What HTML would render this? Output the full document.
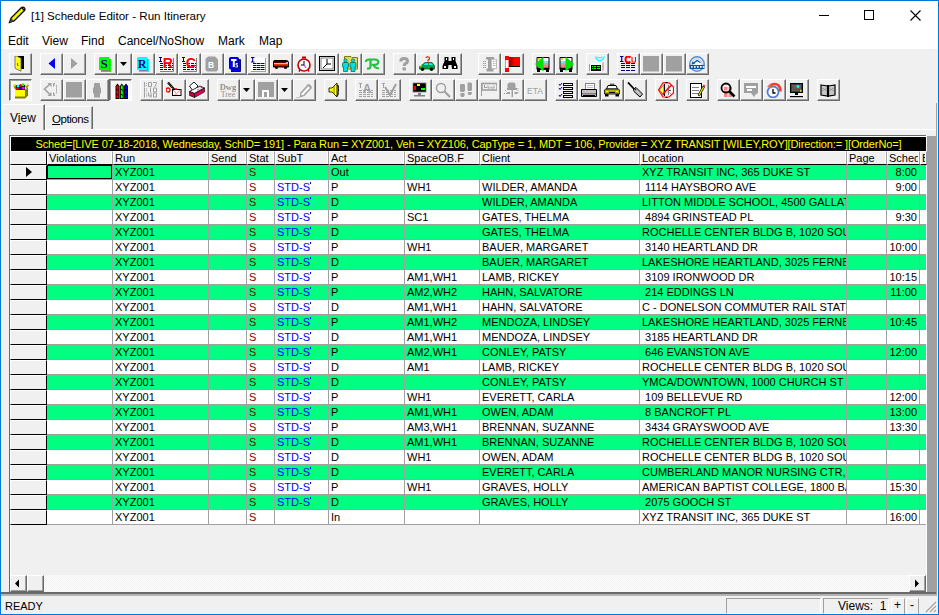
<!DOCTYPE html><html><head><meta charset="utf-8"><style>
*{box-sizing:border-box}
html,body{margin:0;padding:0}
body{width:939px;height:615px;overflow:hidden;background:#f0f0f0;position:relative;font-family:"Liberation Sans",sans-serif;}
.a{position:absolute}
.t{position:absolute;white-space:pre;overflow:hidden;font-size:11px;line-height:14px;color:#000}
.btn{position:absolute;width:23px;height:22px;background:#f0f0f0;border-top:1px solid #fff;border-left:1px solid #fff;border-right:1px solid #696969;border-bottom:1px solid #696969;box-shadow:inset -1px -1px 0 #a0a0a0}
.dd{position:absolute;width:15px;height:22px;background:#f0f0f0;border-top:1px solid #fff;border-left:1px solid #fff;border-right:1px solid #696969;border-bottom:1px solid #696969;box-shadow:inset -1px -1px 0 #a0a0a0}
.prs{position:absolute;width:23px;height:22px;border-top:1px solid #696969;border-left:1px solid #696969;border-right:1px solid #fff;border-bottom:1px solid #fff;box-shadow:inset 1px 1px 0 #a0a0a0;background-color:#fff;background-image:linear-gradient(45deg,#f0f0f0 25%,transparent 25%,transparent 75%,#f0f0f0 75%),linear-gradient(45deg,#f0f0f0 25%,transparent 25%,transparent 75%,#f0f0f0 75%);background-size:2px 2px;background-position:0 0,1px 1px}
svg{position:absolute;left:2px;top:2px}
</style></head><body>

<div class="a" style="left:0;top:0;width:939px;height:49px;background:#fff"></div>
<svg style="left:8px;top:6px" width="18" height="18" viewBox="0 0 18 18"><path d="M1.5 16.5 L3 12 L13.5 1.5 Q15 0.5 16.5 2 Q17.5 3.5 16.5 4.5 L6 15 Z" fill="#ffff00" stroke="#000" stroke-width="1.3"/><path d="M4 12.5 L13 3.5 M5.5 14 L14.5 5" stroke="#808000" stroke-width="0.8" stroke-dasharray="1 1"/><path d="M13.5 1.5 L16.5 4.5" stroke="#000" stroke-width="1.2"/><path d="M1.5 16.5 L3 12 L6 15 Z" fill="#404040"/></svg>
<div class="a" style="left:31px;top:8px;font-size:11.6px;line-height:16px;color:#000;white-space:pre">[1] Schedule Editor - Run Itinerary</div>
<div class="a" style="left:819px;top:15px;width:10px;height:1px;background:#000"></div>
<div class="a" style="left:864px;top:10px;width:10px;height:10px;border:1px solid #000"></div>
<svg style="left:910px;top:10px" width="11" height="11" viewBox="0 0 11 11"><path d="M0.5 0.5 L10.5 10.5 M10.5 0.5 L0.5 10.5" stroke="#000" stroke-width="1.1"/></svg>
<div class="a" style="left:8px;top:34px;font-size:12px;line-height:15px;white-space:pre">Edit</div>
<div class="a" style="left:42px;top:34px;font-size:12px;line-height:15px;white-space:pre">View</div>
<div class="a" style="left:81px;top:34px;font-size:12px;line-height:15px;white-space:pre">Find</div>
<div class="a" style="left:118px;top:34px;font-size:12px;line-height:15px;white-space:pre">Cancel/NoShow</div>
<div class="a" style="left:218px;top:34px;font-size:12px;line-height:15px;white-space:pre">Mark</div>
<div class="a" style="left:259px;top:34px;font-size:12px;line-height:15px;white-space:pre">Map</div>
<div class="btn" style="left:9px;top:53px"></div>
<svg style="left:12px;top:56px" width="16" height="16" viewBox="0 0 16 16"><path d="M6 0 H12 V13 H6 Z" fill="#000"/><path d="M3 0 H5 L6 1 H7 L8 2 H9 V15 H8 L7 14 H6 L5 13 H4 L3 12 Z" fill="#ff0" stroke="#5a5a7a" stroke-width="0.8"/><path d="M5.5 7 V9.5 H6.5" stroke="#5a5a7a" fill="none"/></svg>
<div class="btn" style="left:40px;top:53px"></div>
<svg style="left:43px;top:56px" width="16" height="16" viewBox="0 0 16 16"><path d="M12 2 L5.5 7.5 L12 13 Z" fill="#0000ff"/></svg>
<div class="btn" style="left:63px;top:53px"></div>
<svg style="left:66px;top:56px" width="16" height="16" viewBox="0 0 16 16"><path d="M5 2 L11.5 7.5 L5 13 Z" fill="#a0a0a0"/></svg>
<div class="btn" style="left:94px;top:53px"></div>
<svg style="left:97px;top:56px" width="16" height="16" viewBox="0 0 16 16"><rect x="4" y="3" width="10" height="13" fill="#00ff00"/><path d="M12.5 3 V14.5 H4" stroke="#808080" fill="none"/><path d="M3 1 H12 V14 H2 V2 Z" fill="#00ff00"/><text x="7" y="12" font-family="Liberation Serif" font-weight="bold" font-size="13" fill="#000080" text-anchor="middle">S</text></svg>
<div class="dd" style="left:117px;top:53px"></div>
<svg style="left:120px;top:62px" width="8" height="5"><path d="M0 0 H7 L3.5 4 Z" fill="#000"/></svg>
<div class="btn" style="left:132px;top:53px"></div>
<svg style="left:135px;top:56px" width="16" height="16" viewBox="0 0 16 16"><rect x="4" y="3" width="10" height="13" fill="#00ffff"/><path d="M12.5 3 V14.5 H4" stroke="#808080" fill="none"/><path d="M3 1 H12 V14 H2 V2 Z" fill="#00ffff"/><text x="7" y="12" font-family="Liberation Serif" font-weight="bold" font-size="12" fill="#000080" text-anchor="middle">R</text></svg>
<div class="btn" style="left:155px;top:53px"></div>
<svg style="left:158px;top:56px" width="16" height="16" viewBox="0 0 16 16"><path d="M1.5 1.5 H14.5 V14.5 H1.5Z" fill="#fff"/><path d="M15.5 2 V15.5 H2" stroke="#808080" fill="none"/><path d="M1 1.5 H4 M2.5 1 V5 M1 5.5 H4" stroke="#000080"/><path d="M2 7.5 H15" stroke="#000080" stroke-dasharray="3 1"/><path d="M2 9.5 H15" stroke="#000080" stroke-dasharray="3 1"/><path d="M2 11.5 H15" stroke="#000080" stroke-dasharray="3 1"/><path d="M2 13.5 H15" stroke="#000080" stroke-dasharray="3 1"/><text x="9.8" y="11.5" font-family="Liberation Sans" font-weight="bold" font-size="14" fill="#ff0000" text-anchor="middle">R</text></svg>
<div class="btn" style="left:178px;top:53px"></div>
<svg style="left:181px;top:56px" width="16" height="16" viewBox="0 0 16 16"><path d="M1.5 1.5 H14.5 V14.5 H1.5Z" fill="#fff"/><path d="M15.5 2 V15.5 H2" stroke="#808080" fill="none"/><path d="M1 1.5 H4 M2.5 1 V5 M1 5.5 H4" stroke="#000080"/><path d="M2 7.5 H15" stroke="#000080" stroke-dasharray="3 1"/><path d="M2 9.5 H15" stroke="#000080" stroke-dasharray="3 1"/><path d="M2 11.5 H15" stroke="#000080" stroke-dasharray="3 1"/><path d="M2 13.5 H15" stroke="#000080" stroke-dasharray="3 1"/><text x="9.8" y="12" font-family="Liberation Sans" font-weight="bold" font-size="14" fill="#ff0000" text-anchor="middle">C</text></svg>
<div class="btn" style="left:201px;top:53px"></div>
<svg style="left:204px;top:56px" width="16" height="16" viewBox="0 0 16 16"><path d="M4 0.5 H11 L14 3.5 V14 L12.5 15.5 H3 L1.5 14 V3 Z" fill="#a0a0a0"/><text x="7" y="11.5" font-family="Liberation Sans" font-weight="bold" font-size="8.5" fill="#fff" text-anchor="middle">B</text></svg>
<div class="btn" style="left:224px;top:53px"></div>
<svg style="left:227px;top:56px" width="16" height="16" viewBox="0 0 16 16"><rect x="4" y="3" width="9.5" height="12" fill="#0000ff"/><path d="M13.5 3.5 V15.5 H4" stroke="#000080" fill="none"/><rect x="2.5" y="1.5" width="9" height="11.5" rx="1" fill="#0000ff" stroke="#000080" stroke-width="1"/><path d="M4 3 H9.5 V5 H7.8 V11 H5.8 V5 H4 Z" fill="#fff"/><path d="M10.8 7.5 H9 V9 H10.5 V11 H8.5" stroke="#fff" stroke-width="0.9" fill="none"/></svg>
<div class="btn" style="left:247px;top:53px"></div>
<svg style="left:250px;top:56px" width="16" height="16" viewBox="0 0 16 16"><rect x="1" y="1.5" width="14" height="13" fill="#fff"/><path d="M15.5 2 V15.5 H1" stroke="#a0a0a0" fill="none"/><path d="M1 1.5 H4.5 M2.7 1.5 V6 M1 6 H4.5" stroke="#000080" stroke-width="1.1"/><path d="M3 7.5 H15" stroke="#000080" stroke-dasharray="3.5 0.5"/><path d="M3 9.5 H15" stroke="#000080" stroke-dasharray="3.5 0.5"/><path d="M3 11.5 H15" stroke="#000080" stroke-dasharray="3.5 0.5"/><path d="M3 13.5 H15" stroke="#000080" stroke-dasharray="3.5 0.5"/></svg>
<div class="btn" style="left:270px;top:53px"></div>
<svg style="left:273px;top:56px" width="16" height="16" viewBox="0 0 16 16"><path d="M0.5 5.5 Q0.5 4.5 2 4.5 H13.5 Q15.5 4.5 15.5 7 V11 H0.5 Z" fill="#900000" stroke="#000" stroke-width="1"/><rect x="1" y="5" width="14" height="1.5" fill="#300000"/><rect x="1" y="7.2" width="14" height="1.2" fill="#ffff40"/><rect x="1" y="8.4" width="14" height="1.2" fill="#ff2000"/><rect x="13" y="6" width="2" height="2" fill="#c0c0c0"/><circle cx="3.5" cy="11.5" r="1.5" fill="#000"/><circle cx="12.5" cy="11.5" r="1.5" fill="#000"/></svg>
<div class="btn" style="left:293px;top:53px"></div>
<svg style="left:296px;top:56px" width="16" height="16" viewBox="0 0 16 16"><circle cx="8" cy="9" r="6" fill="#fff" stroke="#c00000" stroke-width="1.6"/><rect x="6" y="0.5" width="4" height="2" fill="#c00000"/><path d="M8 5 V9 H5" stroke="#000" fill="none"/><path d="M8 9 L10 12" stroke="#ff00ff"/><path d="M4 14 L3 15.5 M12 14 L13 15.5" stroke="#c00000" stroke-width="1.5"/></svg>
<div class="btn" style="left:316px;top:53px"></div>
<svg style="left:319px;top:56px" width="16" height="16" viewBox="0 0 16 16"><rect x="0.5" y="0.5" width="15" height="14" fill="#fff" stroke="#000"/><rect x="2" y="2" width="12" height="11" fill="#fff" stroke="#808080" stroke-width="1"/><path d="M8 3 V8 H12 M8 8 L4 12" stroke="#000" fill="none"/></svg>
<div class="btn" style="left:339px;top:53px"></div>
<svg style="left:342px;top:56px" width="16" height="16" viewBox="0 0 16 16"><path d="M2.5 0.5 H9 L10 1.5 H15.5 V13 H2.5 Z" fill="#e0d860" stroke="#808000"/><circle cx="3.5" cy="4.5" r="1.7" fill="#00e0e0" stroke="#004040" stroke-width="0.5"/><circle cx="11" cy="4.5" r="1.7" fill="#00e0e0" stroke="#004040" stroke-width="0.5"/><path d="M1 6.5 H6 L6.5 7.5 V11 H5.5 V15.5 H1.5 V11 H0.5 V7.5 Z M8.5 6.5 H13.5 L14 7.5 V11 H13 V15.5 H9 V11 H8 V7.5 Z" fill="#00e0e0" stroke="#004040" stroke-width="0.6"/></svg>
<div class="btn" style="left:362px;top:53px"></div>
<svg style="left:365px;top:56px" width="16" height="16" viewBox="0 0 16 16"><path d="M0.8 6 Q1 3.5 4 3.5 H10 Q13.3 3.5 13.3 6 Q13.3 8.5 10 8.8 H6.5" stroke="#20c040" stroke-width="2" fill="none"/><path d="M5.5 4 V10.5 Q5.5 13 2 12.5" stroke="#20c040" stroke-width="2.2" fill="none"/><path d="M8.5 9 Q10 12.8 13.8 12" stroke="#20c040" stroke-width="2" fill="none"/></svg>
<div class="btn" style="left:393px;top:53px"></div>
<svg style="left:396px;top:56px" width="16" height="16" viewBox="0 0 16 16"><path d="M4.8 5.5 Q4.8 2.5 8 2.5 Q11.5 2.5 11.5 5 Q11.5 6.8 9.5 7.5 Q8.2 8 8.2 10" stroke="#a0a0a0" stroke-width="3" fill="none"/><rect x="6.5" y="11.3" width="3.5" height="3.2" rx="1" fill="#a0a0a0"/></svg>
<div class="btn" style="left:416px;top:53px"></div>
<svg style="left:419px;top:56px" width="16" height="16" viewBox="0 0 16 16"><path d="M7 2 Q7 0.8 8.5 0.8 Q10.5 0.8 10.5 2.5 Q10.5 3.5 9 4 V5" stroke="#ff0000" stroke-width="1.1" fill="none"/><rect x="8.5" y="5.5" width="1.2" height="1" fill="#ff0000"/><path d="M0.5 13 V10 L3 9 L6 6.5 H13 L15.5 9.5 V13 Z" fill="#00a040" stroke="#004000" stroke-width="0.6"/><path d="M4.5 9 L6.5 7.3 H9 V9 Z M10 7.3 H12.5 L14 9 H10Z" fill="#00ffff"/><rect x="0.5" y="9" width="2" height="1.5" fill="#ff0"/><circle cx="3.5" cy="13.2" r="1.7" fill="#000"/><circle cx="12.5" cy="13.2" r="1.7" fill="#000"/></svg>
<div class="btn" style="left:439px;top:53px"></div>
<svg style="left:442px;top:56px" width="16" height="16" viewBox="0 0 16 16"><path d="M2.5 1 H6.5 V5 H9.5 V1 H13.5 V5 L15.5 10 V13 H10 L9.5 9 H6.5 L6 13 H0.5 V10 L2.5 5 Z" fill="#000"/><rect x="2" y="10" width="2" height="2" fill="#fff"/><rect x="12" y="10" width="2" height="2" fill="#fff"/><rect x="4" y="2" width="1" height="2" fill="#fff"/><rect x="11" y="2" width="1" height="2" fill="#fff"/></svg>
<div class="btn" style="left:478px;top:53px"></div>
<svg style="left:481px;top:56px" width="16" height="16" viewBox="0 0 16 16"><path d="M5 1 H13 V3.5 H11 V12.5 H12.5 V15.5 H5.5 V12.5 H7 V3.5 H5 Z" fill="#a0a0a0"/><path d="M2 5.5 H5 M2 7.5 H5 M2 9.5 H5 M2 11.5 H5" stroke="#a0a0a0" stroke-dasharray="1.5 0.5"/><rect x="10.5" y="3.5" width="5" height="9" fill="#fff" stroke="#c0c0c0"/><path d="M12 5.5 H14.5 M12 7.5 H14.5 M12 9.5 H14.5" stroke="#a0a0a0" stroke-dasharray="1 0.5"/></svg>
<div class="btn" style="left:501px;top:53px"></div>
<svg style="left:504px;top:56px" width="16" height="16" viewBox="0 0 16 16"><rect x="1" y="0" width="4" height="16" fill="#ff0000"/><rect x="1.5" y="4" width="3" height="8" fill="#fff"/><defs><linearGradient id="fg" x1="0" x2="1"><stop offset="0" stop-color="#800000"/><stop offset="0.5" stop-color="#ff0000"/><stop offset="1" stop-color="#ff0000"/></linearGradient></defs><rect x="5" y="1" width="11" height="9.5" fill="url(#fg)"/><rect x="5" y="10" width="11" height="1" fill="#000"/></svg>
<div class="btn" style="left:532px;top:53px"></div>
<svg style="left:535px;top:56px" width="16" height="16" viewBox="0 0 16 16"><rect x="1.5" y="1" width="13" height="13" rx="1" fill="#000"/><rect x="2.5" y="2" width="11" height="3" fill="#fff"/><rect x="3" y="2" width="2" height="2" fill="#e0e000"/><rect x="2.5" y="5" width="11" height="2.5" fill="#80e0f0"/><rect x="2.5" y="7.5" width="11" height="1.2" fill="#fff"/><rect x="2.5" y="8.7" width="11" height="3" fill="#ff8080"/><rect x="2" y="14" width="3" height="2" fill="#000"/><rect x="11" y="14" width="3" height="2" fill="#000"/><path d="M8.5 0.5 V15.5 L0 8 Z" fill="#00e000"/></svg>
<div class="btn" style="left:555px;top:53px"></div>
<svg style="left:558px;top:56px" width="16" height="16" viewBox="0 0 16 16"><rect x="1.5" y="1" width="13" height="13" rx="1" fill="#000"/><rect x="2.5" y="2" width="11" height="3" fill="#fff"/><rect x="3" y="2" width="2" height="2" fill="#e0e000"/><rect x="2.5" y="5" width="11" height="2.5" fill="#80e0f0"/><rect x="2.5" y="7.5" width="11" height="1.2" fill="#fff"/><rect x="2.5" y="8.7" width="11" height="3" fill="#ff8080"/><rect x="2" y="14" width="3" height="2" fill="#000"/><rect x="11" y="14" width="3" height="2" fill="#000"/><path d="M7.5 0.5 V15.5 L16 8 Z" fill="#00e000"/></svg>
<div class="btn" style="left:586px;top:53px"></div>
<svg style="left:589px;top:56px" width="16" height="16" viewBox="0 0 16 16"><path d="M6.5 0.5 Q7.5 4 10.5 5 Q14 4 15.5 0.5" stroke="#00ffff" stroke-width="1.1" fill="none"/><path d="M8.5 1 Q10.5 3 13.5 1" stroke="#00ffff" stroke-width="1" fill="none"/><path d="M1 7 H13 L15 6 V14 L13 15.5 H1 Z" fill="#f8f8f8"/><rect x="0" y="8" width="1" height="7" fill="#a0a0a0"/><path d="M13 7 L15 6 V14 L13 15.5 Z" fill="#c0c0c0"/><rect x="2" y="9" width="10" height="6" fill="#000"/><path d="M3 10.5 H4 M5 10.5 H7 M8 10.5 H11 M3 12.5 H4 M5 12.5 H7 M8 12.5 H11" stroke="#00ff00"/></svg>
<div class="btn" style="left:617px;top:53px"></div>
<svg style="left:620px;top:56px" width="16" height="16" viewBox="0 0 16 16"><path d="M0 0.5 H3.5 M1.7 0.5 V5.5 M0 5.5 H3.5" stroke="#000080" stroke-width="1.2"/><path d="M1 7.5 H16" stroke="#000080" stroke-width="1.1" stroke-dasharray="4 1"/><path d="M1 9.5 H16" stroke="#000080" stroke-width="1.1" stroke-dasharray="4 1"/><path d="M1 11.5 H16" stroke="#000080" stroke-width="1.1" stroke-dasharray="4 1"/><path d="M1 14.5 H16" stroke="#000080" stroke-width="1.1" stroke-dasharray="4 1"/><path d="M10.5 1.5 Q9.5 0.5 8 0.5 Q5.5 0.5 5.5 3.5 Q5.5 6.5 8 6.5 Q9.5 6.5 10.5 5.5" stroke="#ff0000" stroke-width="2" fill="none"/><path d="M12 1 V5 Q12 6.2 13.8 6.2 Q15.5 6.2 15.5 5 V1" stroke="#ff0000" stroke-width="1.1" fill="none"/></svg>
<div class="btn" style="left:640px;top:53px"></div>
<svg style="left:643px;top:56px" width="16" height="16" viewBox="0 0 16 16"><rect x="0" y="0" width="16" height="15.5" fill="#a0a0a0"/></svg>
<div class="btn" style="left:663px;top:53px"></div>
<svg style="left:666px;top:56px" width="16" height="16" viewBox="0 0 16 16"><rect x="0" y="0" width="16" height="15.5" fill="#a0a0a0"/></svg>
<div class="btn" style="left:686px;top:53px"></div>
<svg style="left:689px;top:56px" width="16" height="16" viewBox="0 0 16 16"><circle cx="8" cy="8" r="7.2" fill="#f4f6fa" stroke="#5a8cc8" stroke-width="1.5"/><circle cx="8" cy="8" r="5.2" fill="none" stroke="#b0c8e8" stroke-width="1"/><rect x="0.5" y="9" width="15" height="4" fill="#0a55a5"/><rect x="2" y="10" width="1.6" height="1.8" fill="#fff"/><rect x="5" y="10" width="1.6" height="1.8" fill="#fff"/><rect x="8" y="10" width="1.6" height="1.8" fill="#fff"/><rect x="11" y="10" width="1.6" height="1.8" fill="#fff"/><rect x="13.8" y="10" width="1.6" height="1.8" fill="#fff"/><path d="M4 7.5 L8 4.5 L11.5 6.5" stroke="#0a55a5" stroke-width="1.4" fill="none"/><path d="M2.8 8.5 L3.3 5.5 L6 7.8 Z" fill="#0a55a5"/></svg>
<div class="prs" style="left:9px;top:79px"></div>
<svg style="left:13px;top:83px" width="16" height="16" viewBox="0 0 16 16"><path d="M0 2.5 L2 1 L4 5 L2.5 7 Z" fill="#808000"/><path d="M0 2.5 L2 1 L2.5 2.5 L0.8 4 Z" fill="#ffff00"/><path d="M12 3 L14.5 1 L16 2.5 L13.5 5 Z" fill="#808000"/><path d="M12.8 2.5 L14.5 1 L15 2 L13.5 3.5Z" fill="#ffff00"/><rect x="3" y="2" width="9" height="5" fill="#000"/><circle cx="5" cy="3" r="1.5" fill="#00ffff"/><circle cx="7.5" cy="2.5" r="1.5" fill="#ff0000"/><circle cx="10" cy="1.8" r="1.5" fill="#00ff00"/><circle cx="4.5" cy="5.5" r="1.5" fill="#ff0000"/><circle cx="7.3" cy="5.6" r="1.6" fill="#0000ff"/><circle cx="10.3" cy="5" r="1.6" fill="#ff00ff"/><rect x="2" y="7" width="10" height="7" fill="#ffff00"/><rect x="2" y="13.5" width="10" height="2" fill="#808000"/><path d="M12 7 L15 4 V12.5 L12 15.5 Z" fill="#808000"/></svg>
<div class="btn" style="left:40px;top:79px"></div>
<svg style="left:43px;top:82px" width="16" height="16" viewBox="0 0 16 16"><path d="M7 2 L1.5 7 L7 12.5" stroke="#a0a0a0" stroke-width="1.6" fill="none"/><path d="M4.5 1 H8.5 V5 Z M4.5 14 H8.5 V10 Z" fill="#a0a0a0"/><path d="M10.5 1.5 H12.5 M10.5 13.5 H12.5 M13.5 3 V12" stroke="#a0a0a0" stroke-dasharray="1.5 0.7" fill="none"/><path d="M10 1 V5 L12 3Z M10 14 V10 L12 12Z" fill="#a0a0a0"/></svg>
<div class="btn" style="left:63px;top:79px"></div>
<svg style="left:66px;top:82px" width="16" height="16" viewBox="0 0 16 16"><rect x="0" y="0" width="16" height="15.5" fill="#a0a0a0"/></svg>
<div class="btn" style="left:86px;top:79px"></div>
<svg style="left:89px;top:82px" width="16" height="16" viewBox="0 0 16 16"><path d="M5.5 1 H10.5 L11 2 V5 L12 6 V11 L11 12 V15.5 H5 V12 L4 11 V6 L5 5 V2 Z" fill="#a0a0a0"/></svg>
<div class="prs" style="left:109px;top:79px"></div>
<svg style="left:113px;top:83px" width="16" height="16" viewBox="0 0 16 16"><path d="M2.5 3 L4.5 0.5 L6.5 3 V16 H2.5 Z" fill="#000"/><rect x="3.5" y="2.5" width="2" height="12.5" fill="#ff0000"/><path d="M3.5 6 L5.5 7.5 M3.5 11 L5.5 12.5" stroke="#000" stroke-width="1"/><path d="M6.8 3 L8.8 0.5 L10.8 3 V16 H6.8 Z" fill="#000"/><rect x="7.8" y="2.5" width="2" height="12.5" fill="#00ff00"/><path d="M7.8 6 L9.8 7.5 M7.8 11 L9.8 12.5" stroke="#000" stroke-width="1"/><path d="M11 3 L13 0.5 L15 3 V16 H11 Z" fill="#000"/><rect x="12" y="2.5" width="2" height="12.5" fill="#0000ff"/><path d="M12 6 L14 7.5 M12 11 L14 12.5" stroke="#000" stroke-width="1"/></svg>
<div class="btn" style="left:140px;top:79px"></div>
<svg style="left:143px;top:82px" width="16" height="16" viewBox="0 0 16 16"><path d="M1.5 0 V5 M5.5 0.5 H8.5 V4.5 H5.5 Z M10 0.5 H13.5 V1.5 L11.5 5 " stroke="#a0a0a0" fill="none"/><path d="M3 1h1v1h-1z M3 3h1v1h-1z" fill="#a0a0a0"/><path d="M1.5 5.5 V10.5 M7.5 5.5 V10.5 M10.5 6.0 H13.5 V10.0 H10.5 Z " stroke="#a0a0a0" fill="none"/><path d="M3 6.5h1v1h-1z M3 8.5h1v1h-1z" fill="#a0a0a0"/><path d="M1.5 10.5 V15.5 M5.5 10.5 V14.0 H9 M8 10.5 V15.5 M10.5 11.0 H13.5 V15.0 H10.5 Z " stroke="#a0a0a0" fill="none"/><path d="M3 11.5h1v1h-1z M3 13.5h1v1h-1z" fill="#a0a0a0"/></svg>
<div class="btn" style="left:163px;top:79px"></div>
<svg style="left:166px;top:82px" width="16" height="16" viewBox="0 0 16 16"><path d="M2 0.5 L9.5 9" stroke="#000" stroke-width="2.2"/><path d="M2.5 1.2 L9 8.5" stroke="#c0c000" stroke-width="0.8" stroke-dasharray="1 1"/><ellipse cx="5" cy="8" rx="2.5" ry="1.8" fill="#fff"/><circle cx="2" cy="8" r="2" fill="#fff" stroke="#ff0000" stroke-width="1.3"/><rect x="6.5" y="7.5" width="8.5" height="6" fill="#fff" stroke="#000" stroke-width="1"/><path d="M7 8 L10.5 11.5 L14.5 8" stroke="#ff8080" fill="none"/><path d="M8 13 L10 10.5 L12 13" fill="#ffb0b0"/><circle cx="10" cy="7" r="1" fill="#ff0000"/></svg>
<div class="btn" style="left:186px;top:79px"></div>
<svg style="left:189px;top:82px" width="16" height="16" viewBox="0 0 16 16"><path d="M0.5 4 L5 0 L9 4 L7 6.5 L4 9 Z" fill="#fff" stroke="#000" stroke-width="0.9"/><path d="M0.5 9.5 L11 4 L15.5 6 L5.5 11.5 Z" fill="#e0e0e0" stroke="#000" stroke-width="0.8"/><path d="M2 9.3 L8 6.3 L11 7.5 L5 10.5 Z" fill="#fff"/><path d="M0.5 9.5 L5.5 11.5 V15.5 L0.5 13.5 Z" fill="#c00040" stroke="#000" stroke-width="0.6"/><path d="M5.5 11.5 L15.5 6 V10 L5.5 15.5 Z" fill="#e00050" stroke="#000" stroke-width="0.6"/><circle cx="12.5" cy="5.3" r="0.8" fill="#ff00a0"/><circle cx="9" cy="7.8" r="0.7" fill="#ff00a0"/></svg>
<div class="btn" style="left:217px;top:79px"></div>
<svg style="left:220px;top:82px" width="16" height="16" viewBox="0 0 16 16"><text x="8" y="7.5" font-family="Liberation Serif" font-size="8.5" fill="#909090" text-anchor="middle" font-weight="bold">Dwg</text><text x="8" y="15" font-family="Liberation Serif" font-size="8" fill="#909090" text-anchor="middle">Tree</text></svg>
<div class="dd" style="left:240px;top:79px"></div>
<svg style="left:243px;top:88px" width="8" height="5"><path d="M0 0 H7 L3.5 4 Z" fill="#000"/></svg>
<div class="btn" style="left:255px;top:79px"></div>
<svg style="left:258px;top:82px" width="16" height="16" viewBox="0 0 16 16"><rect x="0" y="0" width="16" height="15" fill="#a0a0a0"/><path d="M4 15 V8 H11 V15" fill="#fff"/><path d="M6 15 V10 H9 V15" fill="#a0a0a0"/></svg>
<div class="dd" style="left:278px;top:79px"></div>
<svg style="left:281px;top:88px" width="8" height="5"><path d="M0 0 H7 L3.5 4 Z" fill="#000"/></svg>
<div class="btn" style="left:293px;top:79px"></div>
<svg style="left:296px;top:82px" width="16" height="16" viewBox="0 0 16 16"><path d="M5 11 L12 3 L15 6 L8 13.5 L4.5 14.5 Z" fill="#fff" stroke="#a0a0a0" stroke-width="1.4"/><path d="M6.5 10.5 L12.5 4.5 M8 12 L14 6" stroke="#c8c8c8" stroke-width="0.8"/><path d="M0.5 15.5 H3.5" stroke="#a0a0a0" stroke-dasharray="1 1"/><path d="M12 3 L13 1.8 L16 5 L15 6 Z" fill="#a0a0a0"/></svg>
<div class="btn" style="left:324px;top:79px"></div>
<svg style="left:327px;top:82px" width="16" height="16" viewBox="0 0 16 16"><path d="M2 6 H5 L10 1 V15 L5 10 H2 Z" fill="#ff0" stroke="#000" stroke-width="0.8"/><path d="M7 4 V12" stroke="#808000"/><path d="M10 3 Q12 4 11 6 Q12 8 11 10 Q12 12 10 14" fill="none" stroke="#000" stroke-width="1.2"/></svg>
<div class="btn" style="left:355px;top:79px"></div>
<svg style="left:358px;top:82px" width="16" height="16" viewBox="0 0 16 16"><rect x="1" y="1" width="3" height="1" fill="#a0a0a0"/><rect x="2" y="1" width="1" height="5" fill="#a0a0a0"/><path d="M1 8.5 H15" stroke="#a0a0a0" stroke-dasharray="3 1"/><path d="M1 10.5 H15" stroke="#a0a0a0" stroke-dasharray="3 1"/><path d="M1 12.5 H15" stroke="#a0a0a0" stroke-dasharray="3 1"/><path d="M1 14.5 H15" stroke="#a0a0a0" stroke-dasharray="3 1"/><text x="9" y="11" font-family="Liberation Sans" font-weight="bold" font-size="12" fill="#a0a0a0" text-anchor="middle">A</text></svg>
<div class="btn" style="left:378px;top:79px"></div>
<svg style="left:381px;top:82px" width="16" height="16" viewBox="0 0 16 16"><rect x="1" y="1" width="3" height="1" fill="#a0a0a0"/><rect x="2" y="1" width="1" height="5" fill="#a0a0a0"/><path d="M1 8.5 H15" stroke="#a0a0a0" stroke-dasharray="3 1"/><path d="M1 10.5 H15" stroke="#a0a0a0" stroke-dasharray="3 1"/><path d="M1 12.5 H15" stroke="#a0a0a0" stroke-dasharray="3 1"/><path d="M1 14.5 H15" stroke="#a0a0a0" stroke-dasharray="3 1"/><path d="M4 5 L9 13 L15 2" stroke="#a0a0a0" stroke-width="2" fill="none"/></svg>
<div class="btn" style="left:409px;top:79px"></div>
<svg style="left:412px;top:82px" width="16" height="16" viewBox="0 0 16 16"><rect x="1" y="1" width="13" height="9" fill="#000" stroke="#808080" stroke-width="0.8"/><rect x="2" y="4" width="2" height="4" fill="#ff0000"/><rect x="5" y="2" width="3" height="2" fill="#ff0"/><rect x="9" y="6" width="4" height="2" fill="#00ff00"/><rect x="6" y="11" width="3" height="2" fill="#808080"/><rect x="2" y="13" width="11" height="1.5" fill="#808080"/></svg>
<div class="btn" style="left:432px;top:79px"></div>
<svg style="left:435px;top:82px" width="16" height="16" viewBox="0 0 16 16"><circle cx="6" cy="6" r="4.5" fill="none" stroke="#a0a0a0" stroke-width="1.5"/><path d="M9.5 9.5 L15 15" stroke="#a0a0a0" stroke-width="2.2"/></svg>
<div class="btn" style="left:455px;top:79px"></div>
<svg style="left:458px;top:82px" width="16" height="16" viewBox="0 0 16 16"><path d="M3 2 H6 L7 3 V9 L6 10 H3 L2 9 V3 Z M2.5 11 H6.5 V14 L5.5 15 H3.5 L2.5 14 Z" fill="#a0a0a0"/><path d="M10 0.5 H13 L14 1.5 V8 L13 9 H10 L9.5 8 V1.5 Z M9.8 10 H13.8 V12 L12.8 13 H10.8 L9.8 12 Z" fill="#a0a0a0"/></svg>
<div class="btn" style="left:478px;top:79px"></div>
<svg style="left:481px;top:82px" width="16" height="16" viewBox="0 0 16 16"><rect x="0" y="1" width="1" height="13" fill="#a0a0a0"/><rect x="1" y="1.5" width="15" height="6.5" fill="none" stroke="#a0a0a0" stroke-width="1.6"/><path d="M3.5 3 V6 M3.5 5.5 H6 M7 3.5 V6 H9 M10 4.5 V6 H13 V3.5" stroke="#a0a0a0" fill="none"/></svg>
<div class="btn" style="left:501px;top:79px"></div>
<svg style="left:504px;top:82px" width="16" height="16" viewBox="0 0 16 16"><path d="M5 0.5 H10 L11.5 2 V6 H3.5 V2 Z" fill="#a0a0a0"/><rect x="3" y="6" width="10" height="2" fill="#a0a0a0"/><rect x="7.5" y="8" width="1.5" height="7" fill="#a0a0a0"/><path d="M1.5 8 V10 M14 6 V11 M0 11.5 H4 M12 11.5 H14" stroke="#a0a0a0" stroke-dasharray="1 1" fill="none"/><rect x="3" y="10" width="3" height="2" fill="#a0a0a0"/><rect x="10.5" y="10" width="3" height="2" fill="#a0a0a0"/></svg>
<div class="btn" style="left:524px;top:79px"></div>
<svg style="left:527px;top:82px" width="16" height="16" viewBox="0 0 16 16"><text x="8" y="12" font-family="Liberation Sans" font-size="8.5" fill="#a0a0a0" text-anchor="middle">ETA</text></svg>
<div class="btn" style="left:555px;top:79px"></div>
<svg style="left:558px;top:82px" width="16" height="16" viewBox="0 0 16 16"><path d="M1 2 L2 3.5 L4 1 M1 6 L2 7.5 L4 5 M1 13 L2 14.5 L4 12" stroke="#0000c0" fill="none"/><rect x="5.5" y="1.5" width="9" height="2" fill="none" stroke="#000"/><rect x="5.5" y="5.5" width="9" height="2" fill="none" stroke="#000"/><rect x="5.5" y="9.5" width="9" height="2" fill="none" stroke="#000"/><rect x="5.5" y="13.5" width="9" height="2" fill="none" stroke="#000"/></svg>
<div class="btn" style="left:578px;top:79px"></div>
<svg style="left:581px;top:82px" width="16" height="16" viewBox="0 0 16 16"><rect x="4.5" y="1.5" width="9" height="6" fill="#fff" stroke="#808080"/><path d="M6 3.5 H12 M6 5.5 H12" stroke="#c0c0c0"/><path d="M0.5 7.5 H15.5 V14.5 H0.5 Z" fill="#c0c0c0" stroke="#000"/><rect x="1" y="11" width="14" height="1.5" fill="#808080"/><rect x="7" y="9" width="3" height="1.2" fill="#e0e000"/><rect x="2" y="13" width="12" height="2" fill="#000"/></svg>
<div class="btn" style="left:601px;top:79px"></div>
<svg style="left:604px;top:82px" width="16" height="16" viewBox="0 0 16 16"><rect x="6.5" y="2" width="3.5" height="1.5" fill="#a0a000" stroke="#000" stroke-width="0.5"/><path d="M4 3.5 H12 L13.5 7 H2.5 Z" fill="#fff" stroke="#000" stroke-width="1"/><path d="M0.5 8 Q1 7 2.5 7 H13.5 Q15 7 15.5 8 V12 H0.5 Z" fill="#b0b000" stroke="#000" stroke-width="0.8"/><rect x="5" y="10" width="6" height="1" fill="#000"/><rect x="1" y="12" width="3.5" height="2.5" fill="#000"/><rect x="11.5" y="12" width="3.5" height="2.5" fill="#000"/><rect x="2" y="9" width="2" height="1" fill="#ff0"/><rect x="12" y="9" width="2" height="1" fill="#ff0"/></svg>
<div class="btn" style="left:624px;top:79px"></div>
<svg style="left:627px;top:82px" width="16" height="16" viewBox="0 0 16 16"><path d="M1 0.5 L7.5 7.5" stroke="#000" stroke-width="1.8"/><path d="M6.5 7 L9 5.5 L15.5 12 L13 15 L7 9.5 Z" fill="#c0c0c0" stroke="#000" stroke-width="1"/><circle cx="8.5" cy="7.5" r="0.8" fill="#000"/></svg>
<div class="btn" style="left:655px;top:79px"></div>
<svg style="left:658px;top:82px" width="16" height="16" viewBox="0 0 16 16"><path d="M5 0.8 H11 L15.5 5 V11 L11 15 H5 L0.5 8 Z" fill="#fff" stroke="#ff0000" stroke-width="1.2"/><path d="M1.5 8 L6 2.5 V13.5 Z" fill="#ffff40" stroke="#000" stroke-width="0.5"/><rect x="6" y="2" width="4.5" height="12" fill="#e8e8e8"/><path d="M6.5 2 V14" stroke="#000" stroke-width="1"/><path d="M10.5 3 V13" stroke="#808080"/><path d="M4.5 12.5 L13.5 3" stroke="#ff0000" stroke-width="1.5"/><path d="M11 8.5 H13 M11.5 10.5 L12.5 11.5" stroke="#404040"/><rect x="7.5" y="0" width="2" height="1" fill="#000"/><rect x="7.5" y="15" width="2" height="1" fill="#000"/></svg>
<div class="btn" style="left:686px;top:79px"></div>
<svg style="left:689px;top:82px" width="16" height="16" viewBox="0 0 16 16"><rect x="1.5" y="1.5" width="11" height="14" fill="#fff" stroke="#000"/><path d="M2 1.5 H12" stroke="#000" stroke-dasharray="1 1"/><path d="M3 5.5 H10 M3 8.5 H10 M3 11.5 H10" stroke="#808080"/><path d="M9 13 L14 4 L15.5 5 L10.5 14 Z" fill="#ff0" stroke="#000" stroke-width="0.8"/><path d="M14 4 L14.7 2.6 L16 3.5 L15.5 5Z" fill="#ff0000"/></svg>
<div class="btn" style="left:717px;top:79px"></div>
<svg style="left:720px;top:82px" width="16" height="16" viewBox="0 0 16 16"><rect x="4" y="5" width="8" height="10" fill="#ff8080"/><path d="M4 9 H12 M8 5 V15" stroke="#fff"/><circle cx="6" cy="6" r="4.5" fill="none" stroke="#000" stroke-width="1.8"/><path d="M9 9 L14.5 14.5" stroke="#000" stroke-width="2.5"/></svg>
<div class="btn" style="left:740px;top:79px"></div>
<svg style="left:743px;top:82px" width="16" height="16" viewBox="0 0 16 16"><rect x="1" y="1" width="14" height="10" fill="#a0a0a0"/><rect x="3" y="4" width="10" height="2" fill="#fff"/><rect x="4" y="7" width="5" height="2" fill="#fff"/><path d="M8 11 L11 15 L13 12 H15 L12 10" fill="#a0a0a0"/></svg>
<div class="btn" style="left:763px;top:79px"></div>
<svg style="left:766px;top:82px" width="16" height="16" viewBox="0 0 16 16"><circle cx="7" cy="10" r="5.5" fill="#fff" stroke="#5080d0" stroke-width="1.8"/><path d="M7 7 V11 H9.5" stroke="#000" fill="none" stroke-width="1.3"/><path d="M3.5 4 Q8 0.5 12 3 Q14.5 5 14.5 9.5" stroke="#f04030" stroke-width="2.6" fill="none"/><path d="M1 4.5 L5 1.5 L5.5 6.5 Z" fill="#f06050"/></svg>
<div class="btn" style="left:786px;top:79px"></div>
<svg style="left:789px;top:82px" width="16" height="16" viewBox="0 0 16 16"><rect x="1.5" y="1.5" width="12" height="9" fill="#404040" stroke="#000"/><rect x="3" y="3" width="9" height="6" fill="#606060"/><path d="M3 5 L6 8 L9 7 L12 9" stroke="#ff0000" fill="none"/><circle cx="9" cy="4.5" r="1.4" fill="#00ffff"/><rect x="11" y="8" width="1.5" height="1.5" fill="#ff0"/><rect x="6" y="11" width="3" height="2" fill="#000"/><rect x="1" y="14" width="13" height="1.2" fill="#000"/></svg>
<div class="btn" style="left:817px;top:79px"></div>
<svg style="left:820px;top:82px" width="16" height="16" viewBox="0 0 16 16"><path d="M1 3 L7.5 4 V14 L1 13 Z M8.5 4 L15 3 V13 L8.5 14Z" fill="#c8c8c8" stroke="#000" stroke-width="1.2"/><path d="M2 6 L7 9 M2 9 L7 6 M9 6 L14 9 M9 9 L14 6" stroke="#808080" stroke-width="0.6"/><rect x="7" y="3" width="2" height="12" fill="#000"/></svg>
<div class="a" style="left:2px;top:129px;width:935px;height:6px;border-top:1px solid #fff"></div>
<div class="a" style="left:45px;top:106px;width:48px;height:23px;border-top:1px solid #fff;border-left:1px solid #fff;border-right:1px solid #696969;box-shadow:inset -1px 0 0 #a0a0a0"></div>
<div class="a" style="left:2px;top:104px;width:43px;height:26px;background:#f0f0f0;border-top:1px solid #fff;border-left:1px solid #fff;border-right:1px solid #696969;box-shadow:inset -1px 0 0 #a0a0a0"></div>
<div class="a" style="left:10px;top:111px;font-size:12px;line-height:15px;white-space:pre">View</div>
<div class="a" style="left:18px;top:123px;width:3px;height:1px;background:#000"></div>
<div class="a" style="left:52px;top:112px;font-size:11.5px;letter-spacing:-0.45px;line-height:15px;white-space:pre">Options</div>
<div class="a" style="left:52px;top:124px;width:8px;height:1px;background:#000"></div>
<div class="a" style="left:936px;top:103px;width:1px;height:491px;background:#a0a0a0"></div>
<div class="a" style="left:9px;top:135px;width:917px;height:457px;border-top:1px solid #696969;border-left:1px solid #696969;box-shadow:inset 1px 1px 0 #fff"></div>
<div class="a" style="left:926px;top:135px;width:1px;height:457px;background:#fff"></div>
<div class="a" style="left:927px;top:136px;width:9px;height:458px;background:#a0a0a0"></div>
<div class="a" style="left:11px;top:137px;width:915px;height:14px;background:#000"></div>
<div class="a" style="left:11px;top:137px;width:915px;height:14px;color:#ff0;font-size:11px;line-height:14px;text-align:center;white-space:pre;letter-spacing:-0.12px">Sched=[LIVE 07-18-2018, Wednesday, SchID= 191] - Para Run = XYZ001, Veh = XYZ106, CapType = 1, MDT = 106, Provider = XYZ TRANSIT [WILEY,ROY][Direction:= ][OrderNo=]</div>
<div class="a" style="left:10px;top:151px;width:37px;height:14px;background:#f0f0f0;border-top:1px solid #fff;border-left:1px solid #fff;border-right:1px solid #000;border-bottom:1px solid #000"></div>
<div class="a" style="left:47px;top:151px;width:66px;height:14px;background:#f0f0f0;border-top:1px solid #fff;border-left:1px solid #fff;border-right:1px solid #a0a0a0;border-bottom:1px solid #000;box-shadow:inset -1px 0 0 #fff"></div>
<div class="t" style="left:49px;top:151px;width:62px">Violations</div>
<div class="a" style="left:113px;top:151px;width:96px;height:14px;background:#f0f0f0;border-top:1px solid #fff;border-left:1px solid #fff;border-right:1px solid #a0a0a0;border-bottom:1px solid #000;box-shadow:inset -1px 0 0 #fff"></div>
<div class="t" style="left:115px;top:151px;width:92px">Run</div>
<div class="a" style="left:209px;top:151px;width:38px;height:14px;background:#f0f0f0;border-top:1px solid #fff;border-left:1px solid #fff;border-right:1px solid #a0a0a0;border-bottom:1px solid #000;box-shadow:inset -1px 0 0 #fff"></div>
<div class="t" style="left:211px;top:151px;width:34px">Send</div>
<div class="a" style="left:247px;top:151px;width:28px;height:14px;background:#f0f0f0;border-top:1px solid #fff;border-left:1px solid #fff;border-right:1px solid #a0a0a0;border-bottom:1px solid #000;box-shadow:inset -1px 0 0 #fff"></div>
<div class="t" style="left:249px;top:151px;width:24px">Stat</div>
<div class="a" style="left:275px;top:151px;width:54px;height:14px;background:#f0f0f0;border-top:1px solid #fff;border-left:1px solid #fff;border-right:1px solid #a0a0a0;border-bottom:1px solid #000;box-shadow:inset -1px 0 0 #fff"></div>
<div class="t" style="left:277px;top:151px;width:50px">SubT</div>
<div class="a" style="left:329px;top:151px;width:76px;height:14px;background:#f0f0f0;border-top:1px solid #fff;border-left:1px solid #fff;border-right:1px solid #a0a0a0;border-bottom:1px solid #000;box-shadow:inset -1px 0 0 #fff"></div>
<div class="t" style="left:331px;top:151px;width:72px">Act</div>
<div class="a" style="left:405px;top:151px;width:75px;height:14px;background:#f0f0f0;border-top:1px solid #fff;border-left:1px solid #fff;border-right:1px solid #a0a0a0;border-bottom:1px solid #000;box-shadow:inset -1px 0 0 #fff"></div>
<div class="t" style="left:407px;top:151px;width:71px">SpaceOB.F</div>
<div class="a" style="left:480px;top:151px;width:160px;height:14px;background:#f0f0f0;border-top:1px solid #fff;border-left:1px solid #fff;border-right:1px solid #a0a0a0;border-bottom:1px solid #000;box-shadow:inset -1px 0 0 #fff"></div>
<div class="t" style="left:482px;top:151px;width:156px">Client</div>
<div class="a" style="left:640px;top:151px;width:207px;height:14px;background:#f0f0f0;border-top:1px solid #fff;border-left:1px solid #fff;border-right:1px solid #a0a0a0;border-bottom:1px solid #000;box-shadow:inset -1px 0 0 #fff"></div>
<div class="t" style="left:642px;top:151px;width:203px">Location</div>
<div class="a" style="left:847px;top:151px;width:40px;height:14px;background:#f0f0f0;border-top:1px solid #fff;border-left:1px solid #fff;border-right:1px solid #a0a0a0;border-bottom:1px solid #000;box-shadow:inset -1px 0 0 #fff"></div>
<div class="t" style="left:849px;top:151px;width:36px">Page</div>
<div class="a" style="left:887px;top:151px;width:33px;height:14px;background:#f0f0f0;border-top:1px solid #fff;border-left:1px solid #fff;border-right:1px solid #a0a0a0;border-bottom:1px solid #000;box-shadow:inset -1px 0 0 #fff"></div>
<div class="t" style="left:889px;top:151px;width:29px">Sched</div>
<div class="a" style="left:920px;top:151px;width:7px;height:14px;background:#f0f0f0;border-top:1px solid #fff;border-left:1px solid #fff;border-right:1px solid #a0a0a0;border-bottom:1px solid #000;box-shadow:inset -1px 0 0 #fff"></div>
<div class="t" style="left:922px;top:151px;width:3px">B</div>
<div class="a" style="left:10px;top:165px;width:37px;height:15px;background:#f0f0f0;border-top:1px solid #fff;border-left:1px solid #fff;border-right:1px solid #000;border-bottom:1px solid #000"></div>
<div class="a" style="left:47px;top:165px;width:879px;height:15px;background:#00ff80;border-bottom:1px solid #a0a0a0"></div>
<div class="t" style="left:115px;top:165px;width:93px;color:#000;text-align:left;">XYZ001</div>
<div class="t" style="left:249px;top:165px;width:25px;color:#800000;text-align:left;">S</div>
<div class="t" style="left:331px;top:165px;width:73px;color:#000;text-align:left;">Out</div>
<div class="t" style="left:642px;top:165px;width:204px;color:#000;text-align:left;">XYZ TRANSIT INC, 365 DUKE ST</div>
<div class="t" style="left:889px;top:165px;width:30px;color:#000;text-align:right;padding-right:2px;">8:00</div>
<div class="a" style="left:10px;top:180px;width:37px;height:15px;background:#f0f0f0;border-top:1px solid #fff;border-left:1px solid #fff;border-right:1px solid #000;border-bottom:1px solid #000"></div>
<div class="a" style="left:47px;top:180px;width:879px;height:15px;background:#fff;border-bottom:1px solid #a0a0a0"></div>
<div class="t" style="left:115px;top:180px;width:93px;color:#000;text-align:left;">XYZ001</div>
<div class="t" style="left:249px;top:180px;width:25px;color:#800000;text-align:left;">S</div>
<div class="t" style="left:277px;top:180px;width:51px;color:#0000ff;text-align:left;">STD-S</div>
<div class="a" style="left:310px;top:182px;width:1px;height:2px;background:#0000ff"></div>
<div class="t" style="left:331px;top:180px;width:73px;color:#000;text-align:left;">P</div>
<div class="t" style="left:407px;top:180px;width:72px;color:#000;text-align:left;">WH1</div>
<div class="t" style="left:482px;top:180px;width:157px;color:#000;text-align:left;">WILDER, AMANDA</div>
<div class="t" style="left:642px;top:180px;width:204px;color:#000;text-align:left;"> 1114 HAYSBORO AVE</div>
<div class="t" style="left:889px;top:180px;width:30px;color:#000;text-align:right;padding-right:2px;">9:00</div>
<div class="a" style="left:10px;top:195px;width:37px;height:15px;background:#f0f0f0;border-top:1px solid #fff;border-left:1px solid #fff;border-right:1px solid #000;border-bottom:1px solid #000"></div>
<div class="a" style="left:47px;top:195px;width:879px;height:15px;background:#00ff80;border-bottom:1px solid #a0a0a0"></div>
<div class="t" style="left:115px;top:195px;width:93px;color:#000;text-align:left;">XYZ001</div>
<div class="t" style="left:249px;top:195px;width:25px;color:#800000;text-align:left;">S</div>
<div class="t" style="left:277px;top:195px;width:51px;color:#0000ff;text-align:left;">STD-S</div>
<div class="a" style="left:310px;top:197px;width:1px;height:2px;background:#0000ff"></div>
<div class="t" style="left:331px;top:195px;width:73px;color:#000;text-align:left;">D</div>
<div class="t" style="left:482px;top:195px;width:157px;color:#000;text-align:left;">WILDER, AMANDA</div>
<div class="t" style="left:642px;top:195px;width:204px;color:#000;text-align:left;">LITTON MIDDLE SCHOOL, 4500 GALLATIN</div>
<div class="a" style="left:10px;top:210px;width:37px;height:15px;background:#f0f0f0;border-top:1px solid #fff;border-left:1px solid #fff;border-right:1px solid #000;border-bottom:1px solid #000"></div>
<div class="a" style="left:47px;top:210px;width:879px;height:15px;background:#fff;border-bottom:1px solid #a0a0a0"></div>
<div class="t" style="left:115px;top:210px;width:93px;color:#000;text-align:left;">XYZ001</div>
<div class="t" style="left:249px;top:210px;width:25px;color:#800000;text-align:left;">S</div>
<div class="t" style="left:277px;top:210px;width:51px;color:#0000ff;text-align:left;">STD-S</div>
<div class="a" style="left:310px;top:212px;width:1px;height:2px;background:#0000ff"></div>
<div class="t" style="left:331px;top:210px;width:73px;color:#000;text-align:left;">P</div>
<div class="t" style="left:407px;top:210px;width:72px;color:#000;text-align:left;">SC1</div>
<div class="t" style="left:482px;top:210px;width:157px;color:#000;text-align:left;">GATES, THELMA</div>
<div class="t" style="left:642px;top:210px;width:204px;color:#000;text-align:left;"> 4894 GRINSTEAD PL</div>
<div class="t" style="left:889px;top:210px;width:30px;color:#000;text-align:right;padding-right:2px;">9:30</div>
<div class="a" style="left:10px;top:225px;width:37px;height:15px;background:#f0f0f0;border-top:1px solid #fff;border-left:1px solid #fff;border-right:1px solid #000;border-bottom:1px solid #000"></div>
<div class="a" style="left:47px;top:225px;width:879px;height:15px;background:#00ff80;border-bottom:1px solid #a0a0a0"></div>
<div class="t" style="left:115px;top:225px;width:93px;color:#000;text-align:left;">XYZ001</div>
<div class="t" style="left:249px;top:225px;width:25px;color:#800000;text-align:left;">S</div>
<div class="t" style="left:277px;top:225px;width:51px;color:#0000ff;text-align:left;">STD-S</div>
<div class="a" style="left:310px;top:227px;width:1px;height:2px;background:#0000ff"></div>
<div class="t" style="left:331px;top:225px;width:73px;color:#000;text-align:left;">D</div>
<div class="t" style="left:482px;top:225px;width:157px;color:#000;text-align:left;">GATES, THELMA</div>
<div class="t" style="left:642px;top:225px;width:204px;color:#000;text-align:left;">ROCHELLE CENTER BLDG B, 1020 SOUTH</div>
<div class="a" style="left:10px;top:240px;width:37px;height:15px;background:#f0f0f0;border-top:1px solid #fff;border-left:1px solid #fff;border-right:1px solid #000;border-bottom:1px solid #000"></div>
<div class="a" style="left:47px;top:240px;width:879px;height:15px;background:#fff;border-bottom:1px solid #a0a0a0"></div>
<div class="t" style="left:115px;top:240px;width:93px;color:#000;text-align:left;">XYZ001</div>
<div class="t" style="left:249px;top:240px;width:25px;color:#800000;text-align:left;">S</div>
<div class="t" style="left:277px;top:240px;width:51px;color:#0000ff;text-align:left;">STD-S</div>
<div class="a" style="left:310px;top:242px;width:1px;height:2px;background:#0000ff"></div>
<div class="t" style="left:331px;top:240px;width:73px;color:#000;text-align:left;">P</div>
<div class="t" style="left:407px;top:240px;width:72px;color:#000;text-align:left;">WH1</div>
<div class="t" style="left:482px;top:240px;width:157px;color:#000;text-align:left;">BAUER, MARGARET</div>
<div class="t" style="left:642px;top:240px;width:204px;color:#000;text-align:left;"> 3140 HEARTLAND DR</div>
<div class="t" style="left:889px;top:240px;width:30px;color:#000;text-align:right;padding-right:2px;">10:00</div>
<div class="a" style="left:10px;top:255px;width:37px;height:15px;background:#f0f0f0;border-top:1px solid #fff;border-left:1px solid #fff;border-right:1px solid #000;border-bottom:1px solid #000"></div>
<div class="a" style="left:47px;top:255px;width:879px;height:15px;background:#00ff80;border-bottom:1px solid #a0a0a0"></div>
<div class="t" style="left:115px;top:255px;width:93px;color:#000;text-align:left;">XYZ001</div>
<div class="t" style="left:249px;top:255px;width:25px;color:#800000;text-align:left;">S</div>
<div class="t" style="left:277px;top:255px;width:51px;color:#0000ff;text-align:left;">STD-S</div>
<div class="a" style="left:310px;top:257px;width:1px;height:2px;background:#0000ff"></div>
<div class="t" style="left:331px;top:255px;width:73px;color:#000;text-align:left;">D</div>
<div class="t" style="left:482px;top:255px;width:157px;color:#000;text-align:left;">BAUER, MARGARET</div>
<div class="t" style="left:642px;top:255px;width:204px;color:#000;text-align:left;">LAKESHORE HEARTLAND, 3025 FERNBROOK</div>
<div class="a" style="left:10px;top:270px;width:37px;height:15px;background:#f0f0f0;border-top:1px solid #fff;border-left:1px solid #fff;border-right:1px solid #000;border-bottom:1px solid #000"></div>
<div class="a" style="left:47px;top:270px;width:879px;height:15px;background:#fff;border-bottom:1px solid #a0a0a0"></div>
<div class="t" style="left:115px;top:270px;width:93px;color:#000;text-align:left;">XYZ001</div>
<div class="t" style="left:249px;top:270px;width:25px;color:#800000;text-align:left;">S</div>
<div class="t" style="left:277px;top:270px;width:51px;color:#0000ff;text-align:left;">STD-S</div>
<div class="a" style="left:310px;top:272px;width:1px;height:2px;background:#0000ff"></div>
<div class="t" style="left:331px;top:270px;width:73px;color:#000;text-align:left;">P</div>
<div class="t" style="left:407px;top:270px;width:72px;color:#000;text-align:left;">AM1,WH1</div>
<div class="t" style="left:482px;top:270px;width:157px;color:#000;text-align:left;">LAMB, RICKEY</div>
<div class="t" style="left:642px;top:270px;width:204px;color:#000;text-align:left;"> 3109 IRONWOOD DR</div>
<div class="t" style="left:889px;top:270px;width:30px;color:#000;text-align:right;padding-right:2px;">10:15</div>
<div class="a" style="left:10px;top:285px;width:37px;height:15px;background:#f0f0f0;border-top:1px solid #fff;border-left:1px solid #fff;border-right:1px solid #000;border-bottom:1px solid #000"></div>
<div class="a" style="left:47px;top:285px;width:879px;height:15px;background:#00ff80;border-bottom:1px solid #a0a0a0"></div>
<div class="t" style="left:115px;top:285px;width:93px;color:#000;text-align:left;">XYZ001</div>
<div class="t" style="left:249px;top:285px;width:25px;color:#800000;text-align:left;">S</div>
<div class="t" style="left:277px;top:285px;width:51px;color:#0000ff;text-align:left;">STD-S</div>
<div class="a" style="left:310px;top:287px;width:1px;height:2px;background:#0000ff"></div>
<div class="t" style="left:331px;top:285px;width:73px;color:#000;text-align:left;">P</div>
<div class="t" style="left:407px;top:285px;width:72px;color:#000;text-align:left;">AM2,WH2</div>
<div class="t" style="left:482px;top:285px;width:157px;color:#000;text-align:left;">HAHN, SALVATORE</div>
<div class="t" style="left:642px;top:285px;width:204px;color:#000;text-align:left;"> 214 EDDINGS LN</div>
<div class="t" style="left:889px;top:285px;width:30px;color:#000;text-align:right;padding-right:2px;">11:00</div>
<div class="a" style="left:10px;top:300px;width:37px;height:15px;background:#f0f0f0;border-top:1px solid #fff;border-left:1px solid #fff;border-right:1px solid #000;border-bottom:1px solid #000"></div>
<div class="a" style="left:47px;top:300px;width:879px;height:15px;background:#fff;border-bottom:1px solid #a0a0a0"></div>
<div class="t" style="left:115px;top:300px;width:93px;color:#000;text-align:left;">XYZ001</div>
<div class="t" style="left:249px;top:300px;width:25px;color:#800000;text-align:left;">S</div>
<div class="t" style="left:277px;top:300px;width:51px;color:#0000ff;text-align:left;">STD-S</div>
<div class="a" style="left:310px;top:302px;width:1px;height:2px;background:#0000ff"></div>
<div class="t" style="left:331px;top:300px;width:73px;color:#000;text-align:left;">D</div>
<div class="t" style="left:407px;top:300px;width:72px;color:#000;text-align:left;">AM1,WH1</div>
<div class="t" style="left:482px;top:300px;width:157px;color:#000;text-align:left;">HAHN, SALVATORE</div>
<div class="t" style="left:642px;top:300px;width:204px;color:#000;text-align:left;">C - DONELSON COMMUTER RAIL STATION</div>
<div class="a" style="left:10px;top:315px;width:37px;height:15px;background:#f0f0f0;border-top:1px solid #fff;border-left:1px solid #fff;border-right:1px solid #000;border-bottom:1px solid #000"></div>
<div class="a" style="left:47px;top:315px;width:879px;height:15px;background:#00ff80;border-bottom:1px solid #a0a0a0"></div>
<div class="t" style="left:115px;top:315px;width:93px;color:#000;text-align:left;">XYZ001</div>
<div class="t" style="left:249px;top:315px;width:25px;color:#800000;text-align:left;">S</div>
<div class="t" style="left:277px;top:315px;width:51px;color:#0000ff;text-align:left;">STD-S</div>
<div class="a" style="left:310px;top:317px;width:1px;height:2px;background:#0000ff"></div>
<div class="t" style="left:331px;top:315px;width:73px;color:#000;text-align:left;">P</div>
<div class="t" style="left:407px;top:315px;width:72px;color:#000;text-align:left;">AM1,WH2</div>
<div class="t" style="left:482px;top:315px;width:157px;color:#000;text-align:left;">MENDOZA, LINDSEY</div>
<div class="t" style="left:642px;top:315px;width:204px;color:#000;text-align:left;">LAKESHORE HEARTLAND, 3025 FERNBROOK</div>
<div class="t" style="left:889px;top:315px;width:30px;color:#000;text-align:right;padding-right:2px;">10:45</div>
<div class="a" style="left:10px;top:330px;width:37px;height:15px;background:#f0f0f0;border-top:1px solid #fff;border-left:1px solid #fff;border-right:1px solid #000;border-bottom:1px solid #000"></div>
<div class="a" style="left:47px;top:330px;width:879px;height:15px;background:#fff;border-bottom:1px solid #a0a0a0"></div>
<div class="t" style="left:115px;top:330px;width:93px;color:#000;text-align:left;">XYZ001</div>
<div class="t" style="left:249px;top:330px;width:25px;color:#800000;text-align:left;">S</div>
<div class="t" style="left:277px;top:330px;width:51px;color:#0000ff;text-align:left;">STD-S</div>
<div class="a" style="left:310px;top:332px;width:1px;height:2px;background:#0000ff"></div>
<div class="t" style="left:331px;top:330px;width:73px;color:#000;text-align:left;">D</div>
<div class="t" style="left:407px;top:330px;width:72px;color:#000;text-align:left;">AM1,WH1</div>
<div class="t" style="left:482px;top:330px;width:157px;color:#000;text-align:left;">MENDOZA, LINDSEY</div>
<div class="t" style="left:642px;top:330px;width:204px;color:#000;text-align:left;"> 3185 HEARTLAND DR</div>
<div class="a" style="left:10px;top:345px;width:37px;height:15px;background:#f0f0f0;border-top:1px solid #fff;border-left:1px solid #fff;border-right:1px solid #000;border-bottom:1px solid #000"></div>
<div class="a" style="left:47px;top:345px;width:879px;height:15px;background:#00ff80;border-bottom:1px solid #a0a0a0"></div>
<div class="t" style="left:115px;top:345px;width:93px;color:#000;text-align:left;">XYZ001</div>
<div class="t" style="left:249px;top:345px;width:25px;color:#800000;text-align:left;">S</div>
<div class="t" style="left:277px;top:345px;width:51px;color:#0000ff;text-align:left;">STD-S</div>
<div class="a" style="left:310px;top:347px;width:1px;height:2px;background:#0000ff"></div>
<div class="t" style="left:331px;top:345px;width:73px;color:#000;text-align:left;">P</div>
<div class="t" style="left:407px;top:345px;width:72px;color:#000;text-align:left;">AM2,WH1</div>
<div class="t" style="left:482px;top:345px;width:157px;color:#000;text-align:left;">CONLEY, PATSY</div>
<div class="t" style="left:642px;top:345px;width:204px;color:#000;text-align:left;"> 646 EVANSTON AVE</div>
<div class="t" style="left:889px;top:345px;width:30px;color:#000;text-align:right;padding-right:2px;">12:00</div>
<div class="a" style="left:10px;top:360px;width:37px;height:15px;background:#f0f0f0;border-top:1px solid #fff;border-left:1px solid #fff;border-right:1px solid #000;border-bottom:1px solid #000"></div>
<div class="a" style="left:47px;top:360px;width:879px;height:15px;background:#fff;border-bottom:1px solid #a0a0a0"></div>
<div class="t" style="left:115px;top:360px;width:93px;color:#000;text-align:left;">XYZ001</div>
<div class="t" style="left:249px;top:360px;width:25px;color:#800000;text-align:left;">S</div>
<div class="t" style="left:277px;top:360px;width:51px;color:#0000ff;text-align:left;">STD-S</div>
<div class="a" style="left:310px;top:362px;width:1px;height:2px;background:#0000ff"></div>
<div class="t" style="left:331px;top:360px;width:73px;color:#000;text-align:left;">D</div>
<div class="t" style="left:407px;top:360px;width:72px;color:#000;text-align:left;">AM1</div>
<div class="t" style="left:482px;top:360px;width:157px;color:#000;text-align:left;">LAMB, RICKEY</div>
<div class="t" style="left:642px;top:360px;width:204px;color:#000;text-align:left;">ROCHELLE CENTER BLDG B, 1020 SOUTH</div>
<div class="a" style="left:10px;top:375px;width:37px;height:15px;background:#f0f0f0;border-top:1px solid #fff;border-left:1px solid #fff;border-right:1px solid #000;border-bottom:1px solid #000"></div>
<div class="a" style="left:47px;top:375px;width:879px;height:15px;background:#00ff80;border-bottom:1px solid #a0a0a0"></div>
<div class="t" style="left:115px;top:375px;width:93px;color:#000;text-align:left;">XYZ001</div>
<div class="t" style="left:249px;top:375px;width:25px;color:#800000;text-align:left;">S</div>
<div class="t" style="left:277px;top:375px;width:51px;color:#0000ff;text-align:left;">STD-S</div>
<div class="a" style="left:310px;top:377px;width:1px;height:2px;background:#0000ff"></div>
<div class="t" style="left:331px;top:375px;width:73px;color:#000;text-align:left;">D</div>
<div class="t" style="left:482px;top:375px;width:157px;color:#000;text-align:left;">CONLEY, PATSY</div>
<div class="t" style="left:642px;top:375px;width:204px;color:#000;text-align:left;">YMCA/DOWNTOWN, 1000 CHURCH ST</div>
<div class="a" style="left:10px;top:390px;width:37px;height:15px;background:#f0f0f0;border-top:1px solid #fff;border-left:1px solid #fff;border-right:1px solid #000;border-bottom:1px solid #000"></div>
<div class="a" style="left:47px;top:390px;width:879px;height:15px;background:#fff;border-bottom:1px solid #a0a0a0"></div>
<div class="t" style="left:115px;top:390px;width:93px;color:#000;text-align:left;">XYZ001</div>
<div class="t" style="left:249px;top:390px;width:25px;color:#800000;text-align:left;">S</div>
<div class="t" style="left:277px;top:390px;width:51px;color:#0000ff;text-align:left;">STD-S</div>
<div class="a" style="left:310px;top:392px;width:1px;height:2px;background:#0000ff"></div>
<div class="t" style="left:331px;top:390px;width:73px;color:#000;text-align:left;">P</div>
<div class="t" style="left:407px;top:390px;width:72px;color:#000;text-align:left;">WH1</div>
<div class="t" style="left:482px;top:390px;width:157px;color:#000;text-align:left;">EVERETT, CARLA</div>
<div class="t" style="left:642px;top:390px;width:204px;color:#000;text-align:left;"> 109 BELLEVUE RD</div>
<div class="t" style="left:889px;top:390px;width:30px;color:#000;text-align:right;padding-right:2px;">12:00</div>
<div class="a" style="left:10px;top:405px;width:37px;height:15px;background:#f0f0f0;border-top:1px solid #fff;border-left:1px solid #fff;border-right:1px solid #000;border-bottom:1px solid #000"></div>
<div class="a" style="left:47px;top:405px;width:879px;height:15px;background:#00ff80;border-bottom:1px solid #a0a0a0"></div>
<div class="t" style="left:115px;top:405px;width:93px;color:#000;text-align:left;">XYZ001</div>
<div class="t" style="left:249px;top:405px;width:25px;color:#800000;text-align:left;">S</div>
<div class="t" style="left:277px;top:405px;width:51px;color:#0000ff;text-align:left;">STD-S</div>
<div class="a" style="left:310px;top:407px;width:1px;height:2px;background:#0000ff"></div>
<div class="t" style="left:331px;top:405px;width:73px;color:#000;text-align:left;">P</div>
<div class="t" style="left:407px;top:405px;width:72px;color:#000;text-align:left;">AM1,WH1</div>
<div class="t" style="left:482px;top:405px;width:157px;color:#000;text-align:left;">OWEN, ADAM</div>
<div class="t" style="left:642px;top:405px;width:204px;color:#000;text-align:left;"> 8 BANCROFT PL</div>
<div class="t" style="left:889px;top:405px;width:30px;color:#000;text-align:right;padding-right:2px;">13:00</div>
<div class="a" style="left:10px;top:420px;width:37px;height:15px;background:#f0f0f0;border-top:1px solid #fff;border-left:1px solid #fff;border-right:1px solid #000;border-bottom:1px solid #000"></div>
<div class="a" style="left:47px;top:420px;width:879px;height:15px;background:#fff;border-bottom:1px solid #a0a0a0"></div>
<div class="t" style="left:115px;top:420px;width:93px;color:#000;text-align:left;">XYZ001</div>
<div class="t" style="left:249px;top:420px;width:25px;color:#800000;text-align:left;">S</div>
<div class="t" style="left:277px;top:420px;width:51px;color:#0000ff;text-align:left;">STD-S</div>
<div class="a" style="left:310px;top:422px;width:1px;height:2px;background:#0000ff"></div>
<div class="t" style="left:331px;top:420px;width:73px;color:#000;text-align:left;">P</div>
<div class="t" style="left:407px;top:420px;width:72px;color:#000;text-align:left;">AM3,WH1</div>
<div class="t" style="left:482px;top:420px;width:157px;color:#000;text-align:left;">BRENNAN, SUZANNE</div>
<div class="t" style="left:642px;top:420px;width:204px;color:#000;text-align:left;"> 3434 GRAYSWOOD AVE</div>
<div class="t" style="left:889px;top:420px;width:30px;color:#000;text-align:right;padding-right:2px;">13:30</div>
<div class="a" style="left:10px;top:435px;width:37px;height:15px;background:#f0f0f0;border-top:1px solid #fff;border-left:1px solid #fff;border-right:1px solid #000;border-bottom:1px solid #000"></div>
<div class="a" style="left:47px;top:435px;width:879px;height:15px;background:#00ff80;border-bottom:1px solid #a0a0a0"></div>
<div class="t" style="left:115px;top:435px;width:93px;color:#000;text-align:left;">XYZ001</div>
<div class="t" style="left:249px;top:435px;width:25px;color:#800000;text-align:left;">S</div>
<div class="t" style="left:277px;top:435px;width:51px;color:#0000ff;text-align:left;">STD-S</div>
<div class="a" style="left:310px;top:437px;width:1px;height:2px;background:#0000ff"></div>
<div class="t" style="left:331px;top:435px;width:73px;color:#000;text-align:left;">D</div>
<div class="t" style="left:407px;top:435px;width:72px;color:#000;text-align:left;">AM1,WH1</div>
<div class="t" style="left:482px;top:435px;width:157px;color:#000;text-align:left;">BRENNAN, SUZANNE</div>
<div class="t" style="left:642px;top:435px;width:204px;color:#000;text-align:left;">ROCHELLE CENTER BLDG B, 1020 SOUTH</div>
<div class="a" style="left:10px;top:450px;width:37px;height:15px;background:#f0f0f0;border-top:1px solid #fff;border-left:1px solid #fff;border-right:1px solid #000;border-bottom:1px solid #000"></div>
<div class="a" style="left:47px;top:450px;width:879px;height:15px;background:#fff;border-bottom:1px solid #a0a0a0"></div>
<div class="t" style="left:115px;top:450px;width:93px;color:#000;text-align:left;">XYZ001</div>
<div class="t" style="left:249px;top:450px;width:25px;color:#800000;text-align:left;">S</div>
<div class="t" style="left:277px;top:450px;width:51px;color:#0000ff;text-align:left;">STD-S</div>
<div class="a" style="left:310px;top:452px;width:1px;height:2px;background:#0000ff"></div>
<div class="t" style="left:331px;top:450px;width:73px;color:#000;text-align:left;">D</div>
<div class="t" style="left:407px;top:450px;width:72px;color:#000;text-align:left;">WH1</div>
<div class="t" style="left:482px;top:450px;width:157px;color:#000;text-align:left;">OWEN, ADAM</div>
<div class="t" style="left:642px;top:450px;width:204px;color:#000;text-align:left;">ROCHELLE CENTER BLDG B, 1020 SOUTH</div>
<div class="a" style="left:10px;top:465px;width:37px;height:15px;background:#f0f0f0;border-top:1px solid #fff;border-left:1px solid #fff;border-right:1px solid #000;border-bottom:1px solid #000"></div>
<div class="a" style="left:47px;top:465px;width:879px;height:15px;background:#00ff80;border-bottom:1px solid #a0a0a0"></div>
<div class="t" style="left:115px;top:465px;width:93px;color:#000;text-align:left;">XYZ001</div>
<div class="t" style="left:249px;top:465px;width:25px;color:#800000;text-align:left;">S</div>
<div class="t" style="left:277px;top:465px;width:51px;color:#0000ff;text-align:left;">STD-S</div>
<div class="a" style="left:310px;top:467px;width:1px;height:2px;background:#0000ff"></div>
<div class="t" style="left:331px;top:465px;width:73px;color:#000;text-align:left;">D</div>
<div class="t" style="left:482px;top:465px;width:157px;color:#000;text-align:left;">EVERETT, CARLA</div>
<div class="t" style="left:642px;top:465px;width:204px;color:#000;text-align:left;">CUMBERLAND MANOR NURSING CTR, 4343</div>
<div class="a" style="left:10px;top:480px;width:37px;height:15px;background:#f0f0f0;border-top:1px solid #fff;border-left:1px solid #fff;border-right:1px solid #000;border-bottom:1px solid #000"></div>
<div class="a" style="left:47px;top:480px;width:879px;height:15px;background:#fff;border-bottom:1px solid #a0a0a0"></div>
<div class="t" style="left:115px;top:480px;width:93px;color:#000;text-align:left;">XYZ001</div>
<div class="t" style="left:249px;top:480px;width:25px;color:#800000;text-align:left;">S</div>
<div class="t" style="left:277px;top:480px;width:51px;color:#0000ff;text-align:left;">STD-S</div>
<div class="a" style="left:310px;top:482px;width:1px;height:2px;background:#0000ff"></div>
<div class="t" style="left:331px;top:480px;width:73px;color:#000;text-align:left;">P</div>
<div class="t" style="left:407px;top:480px;width:72px;color:#000;text-align:left;">WH1</div>
<div class="t" style="left:482px;top:480px;width:157px;color:#000;text-align:left;">GRAVES, HOLLY</div>
<div class="t" style="left:642px;top:480px;width:204px;color:#000;text-align:left;">AMERICAN BAPTIST COLLEGE, 1800 BAPTIST</div>
<div class="t" style="left:889px;top:480px;width:30px;color:#000;text-align:right;padding-right:2px;">15:30</div>
<div class="a" style="left:10px;top:495px;width:37px;height:15px;background:#f0f0f0;border-top:1px solid #fff;border-left:1px solid #fff;border-right:1px solid #000;border-bottom:1px solid #000"></div>
<div class="a" style="left:47px;top:495px;width:879px;height:15px;background:#00ff80;border-bottom:1px solid #a0a0a0"></div>
<div class="t" style="left:115px;top:495px;width:93px;color:#000;text-align:left;">XYZ001</div>
<div class="t" style="left:249px;top:495px;width:25px;color:#800000;text-align:left;">S</div>
<div class="t" style="left:277px;top:495px;width:51px;color:#0000ff;text-align:left;">STD-S</div>
<div class="a" style="left:310px;top:497px;width:1px;height:2px;background:#0000ff"></div>
<div class="t" style="left:331px;top:495px;width:73px;color:#000;text-align:left;">D</div>
<div class="t" style="left:482px;top:495px;width:157px;color:#000;text-align:left;">GRAVES, HOLLY</div>
<div class="t" style="left:642px;top:495px;width:204px;color:#000;text-align:left;"> 2075 GOOCH ST</div>
<div class="a" style="left:10px;top:510px;width:37px;height:15px;background:#f0f0f0;border-top:1px solid #fff;border-left:1px solid #fff;border-right:1px solid #000;border-bottom:1px solid #000"></div>
<div class="a" style="left:47px;top:510px;width:879px;height:15px;background:#fff;border-bottom:1px solid #a0a0a0"></div>
<div class="t" style="left:115px;top:510px;width:93px;color:#000;text-align:left;">XYZ001</div>
<div class="t" style="left:249px;top:510px;width:25px;color:#800000;text-align:left;">S</div>
<div class="t" style="left:331px;top:510px;width:73px;color:#000;text-align:left;">In</div>
<div class="t" style="left:642px;top:510px;width:204px;color:#000;text-align:left;">XYZ TRANSIT INC, 365 DUKE ST</div>
<div class="t" style="left:889px;top:510px;width:30px;color:#000;text-align:right;padding-right:2px;">16:00</div>
<div class="a" style="left:112px;top:165px;width:1px;height:360px;background:#a0a0a0"></div>
<div class="a" style="left:208px;top:165px;width:1px;height:360px;background:#a0a0a0"></div>
<div class="a" style="left:246px;top:165px;width:1px;height:360px;background:#a0a0a0"></div>
<div class="a" style="left:274px;top:165px;width:1px;height:360px;background:#a0a0a0"></div>
<div class="a" style="left:328px;top:165px;width:1px;height:360px;background:#a0a0a0"></div>
<div class="a" style="left:404px;top:165px;width:1px;height:360px;background:#a0a0a0"></div>
<div class="a" style="left:479px;top:165px;width:1px;height:360px;background:#a0a0a0"></div>
<div class="a" style="left:639px;top:165px;width:1px;height:360px;background:#a0a0a0"></div>
<div class="a" style="left:846px;top:165px;width:1px;height:360px;background:#a0a0a0"></div>
<div class="a" style="left:886px;top:165px;width:1px;height:360px;background:#a0a0a0"></div>
<div class="a" style="left:919px;top:165px;width:1px;height:360px;background:#a0a0a0"></div>
<div class="a" style="left:26px;top:167px;width:0;height:0;border-top:5px solid transparent;border-bottom:5px solid transparent;border-left:6px solid #000"></div>
<div class="a" style="left:47px;top:165px;width:65px;height:14px;border:1px solid #000"></div>
<div class="a" style="left:44px;top:575px;width:865px;height:17px;background-color:#fff;background-image:linear-gradient(45deg,#f0f0f0 25%,transparent 25%,transparent 75%,#f0f0f0 75%),linear-gradient(45deg,#f0f0f0 25%,transparent 25%,transparent 75%,#f0f0f0 75%);background-size:2px 2px;background-position:0 0,1px 1px"></div>
<div class="btn" style="left:10px;top:575px;width:17px;height:17px"></div>
<div class="btn" style="left:27px;top:575px;width:17px;height:17px"></div>
<div class="btn" style="left:909px;top:575px;width:17px;height:17px"></div>
<svg style="left:14px;top:579px" width="6" height="9"><path d="M1 4.5 L5 0.5 V8.5 Z" fill="#000"/></svg>
<svg style="left:914px;top:579px" width="6" height="9"><path d="M1 0.5 L5 4.5 L1 8.5 Z" fill="#000"/></svg>
<div class="a" style="left:1px;top:592px;width:935px;height:2px;background:#696969"></div>
<div class="a" style="left:1px;top:594px;width:936px;height:2px;background:#b4b4b4"></div>
<div class="a" style="left:5px;top:600px;font-size:11px;line-height:13px;white-space:pre">READY</div>
<div class="a" style="left:726px;top:598px;width:95px;height:16px;border-top:1px solid #a0a0a0;border-left:1px solid #a0a0a0;border-bottom:1px solid #fff;border-right:1px solid #fff"></div>
<div class="a" style="left:823px;top:598px;width:66px;height:16px;border-top:1px solid #a0a0a0;border-left:1px solid #a0a0a0;border-bottom:1px solid #fff;border-right:1px solid #fff"></div>
<div class="a" style="left:838px;top:599px;font-size:12px;line-height:14px;white-space:pre">Views:  1</div>
<div class="a" style="left:891px;top:598px;width:14px;height:16px;border-top:1px solid #fff;border-left:1px solid #fff;border-right:1px solid #a0a0a0"></div>
<div class="a" style="left:906px;top:598px;width:13px;height:16px;border-top:1px solid #fff;border-left:1px solid #fff;border-right:1px solid #a0a0a0"></div>
<div class="a" style="left:894px;top:598px;font-size:12px;line-height:15px">+</div>
<div class="a" style="left:910px;top:598px;font-size:12px;line-height:15px">-</div>
<svg style="left:925px;top:601px" width="12" height="12" viewBox="0 0 12 12"><path d="M11 1 L1 11 M11 5 L5 11 M11 9 L9 11" stroke="#a0a0a0" stroke-width="1.2"/><path d="M12 2 L2 12 M12 6 L6 12 M12 10 L10 12" stroke="#fff" stroke-width="0.8"/></svg>
<div class="a" style="left:0;top:0;width:939px;height:615px;border:1px solid #0078d7"></div>
</body></html>
